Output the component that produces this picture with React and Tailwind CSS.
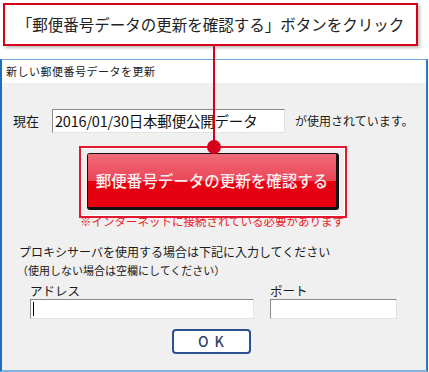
const jp = { fontFamily: '"Noto Sans CJK JP", "Noto Sans", sans-serif' };

/**
 * Manual screenshot: callout pointing at the "check for update" button
 * inside a small Windows-style dialog.
 */
export default function App() {
  return (
    <div className="relative w-[429px] h-[372px] bg-white overflow-hidden" style={jp}>
      {/* Callout */}
      <div className="ml-[3px] mt-[3px] w-[415px] h-[43px] border-2 border-[#d7001a] bg-white shadow-[2px_2px_3px_rgba(0,0,0,0.25)] flex items-center justify-center text-[15.5px] text-[#222] whitespace-nowrap">
        「郵便番号データの更新を確認する」ボタンをクリック
      </div>

      {/* Dialog window */}
      <div className="mt-[13px] w-[428px] h-[313px] border-t border-t-[#6ea6d8] border-l-2 border-l-[#1c6fc0] border-r-2 border-r-[#2a78c4] border-b-2 border-b-[#86b3dd] flex flex-col">
        <div className="h-[23px] bg-white flex items-center pl-[4px] text-[11px] text-[#222] tracking-[0.5px]">
          新しい郵便番号データを更新
        </div>

        <div className="flex-1 bg-[#f0f0f0] flex flex-col text-[#1a1a1a]">
          {/* Current data row */}
          <div className="mt-[26px] flex items-center h-[24px] pl-[11px] whitespace-nowrap">
            <span className="text-[13px] w-[39px]">現在</span>
            <div className="w-[233px] h-[24px] bg-white border border-t-[#8a8a8a] border-l-[#8a8a8a] border-r-[#e3e3e3] border-b-[#e3e3e3] flex items-center pl-[2px] text-[14.5px] leading-none text-[#111] tracking-[-0.2px]">
              2016/01/30日本郵便公開データ
            </div>
            <span className="ml-[10px] text-[12px]">が使用されています。</span>
          </div>

          {/* Update button */}
          <div className="mt-[13px] flex justify-center pr-[2px]">
            <div className="relative z-10 w-[268px] h-[72px] border-2 border-[#e2182f] bg-[#eeeeee] pt-[5px] pl-[6px] shadow-[inset_0_0_0_1px_#ffffff]">
              <div className="w-[252px] h-[57px] rounded-[3px] border border-[#111] border-r-[3px] border-b-[3px] overflow-hidden flex flex-col relative">
                <div className="h-1/2 bg-[linear-gradient(#f06a78,#ea4657)]" />
                <div className="h-1/2 bg-[#e50012]" />
                <div className="absolute inset-0 flex items-center justify-center text-[#fdf0f0] text-[15.5px] font-medium whitespace-nowrap">
                  郵便番号データの更新を確認する
                </div>
              </div>
            </div>
          </div>
          <div className="-mt-[4px] text-center text-[11.5px] leading-[14px] text-[#e8232b] pr-[4px] whitespace-nowrap">
            ※インターネットに接続されている必要があります
          </div>

          {/* Proxy settings */}
          <div className="mt-[16px] pl-[17px] text-[12px] leading-[16px] whitespace-nowrap">
            プロキシサーバを使用する場合は下記に入力してください
          </div>
          <div className="mt-[2px] pl-[15px] text-[11px] leading-[16px] whitespace-nowrap">
            （使用しない場合は空欄にしてください）
          </div>
          <div className="mt-[5px] flex text-[12.5px] leading-[16px] pl-[28px]">
            <span className="w-[240px]">アドレス</span>
            <span>ポート</span>
          </div>
          <div className="flex pl-[28px] gap-[16px]">
            <div className="w-[224px] h-[20px] bg-white border border-t-[#8a8a8a] border-l-[#8a8a8a] border-r-[#e3e3e3] border-b-[#e3e3e3] flex items-center pl-[2px]">
              <div className="w-px h-[14px] bg-black" />
            </div>
            <div className="w-[127px] h-[20px] bg-white border border-t-[#8a8a8a] border-l-[#8a8a8a] border-r-[#e3e3e3] border-b-[#e3e3e3]" />
          </div>
          <div className="mt-[10px] flex justify-center pr-[6px]">
            <div className="w-[79px] h-[25px] rounded-[4px] border-2 border-[#2c4f8f] bg-white flex items-center justify-center text-[14px] font-medium text-[#34466a] tracking-[6px] pl-[6px]">
              OK
            </div>
          </div>
        </div>
      </div>

      {/* Leader line and dot */}
      <div className="absolute left-[213px] top-[46px] w-[2px] h-[101px] bg-[#d7001a] z-20" />
      <div className="absolute left-[207px] top-[140px] w-[14px] h-[14px] rounded-full bg-[#d7001a] z-20" />
    </div>
  );
}
